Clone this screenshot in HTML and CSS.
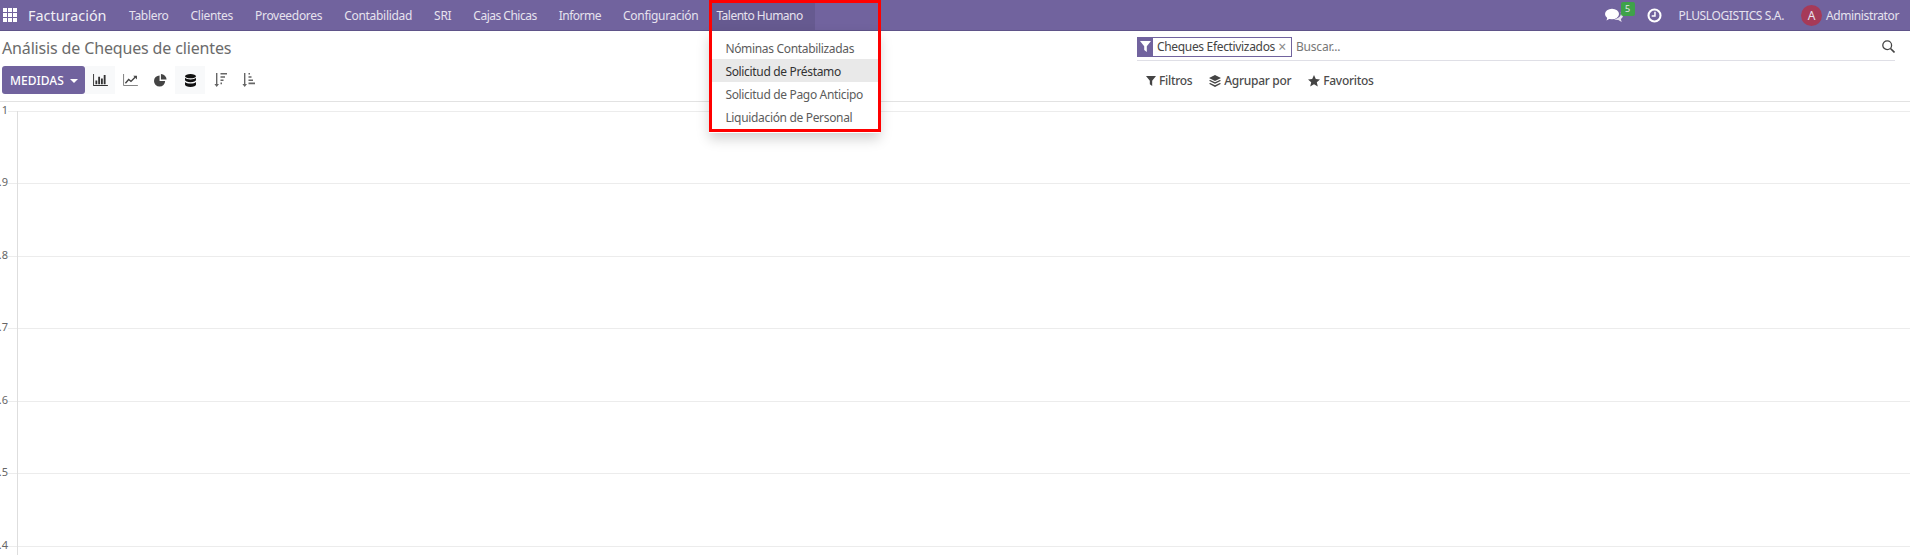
FILE: index.html
```html
<!DOCTYPE html>
<html lang="es">
<head>
    <meta charset="UTF-8">
    <title>Análisis de Cheques de clientes</title>
    <link rel="stylesheet" href="styles.css">
</head>
<body>
    <header class="navbar">
        <a class="apps-toggle">
            <svg width="14" height="14" viewBox="0 0 14 14" fill="#fff"><path d="M0 0h4v4H0zM5 0h4v4H5zM10 0h4v4h-4zM0 5h4v4H0zM5 5h4v4H5zM10 5h4v4h-4zM0 10h4v4H0zM5 10h4v4H5zM10 10h4v4h-4z"/></svg>
        </a>
        <a class="brand">Facturación</a>
        <nav class="menu">
            <a>Tablero</a>
            <a>Clientes</a>
            <a>Proveedores</a>
            <a>Contabilidad</a>
            <a>SRI</a>
            <a class="tight">Cajas Chicas</a>
            <a class="tight">Informe</a>
            <a>Configuración</a>
            <div class="menu-open">
                <a class="active tight">Talento Humano</a>
                <ul class="dropdown">
                    <li>Nóminas Contabilizadas</li>
                    <li class="hover">Solicitud de Préstamo</li>
                    <li>Solicitud de Pago Anticipo</li>
                    <li>Liquidación de Personal</li>
                </ul>
                <div class="highlight"></div>
            </div>
        </nav>
        <div class="systray">
            <span class="chat">
                <svg width="18" height="15" viewBox="0 0 18 15" fill="#fff"><ellipse cx="7" cy="6" rx="7" ry="5.2"/><path d="M2.5 9 1.5 12.5 6 10z"/><path d="M15.4 3.8C17 4.800 18 6.100 18 7.600c0 1.500-.9 2.700-2.200 3.500l.9 3-3.400-2.200c-1.500.2-3.100-.1-4.300-.8 3.900-.1 7-2.500 7-5.800 0-.5-.2-1-.6-1.500z" fill="#e8e4f0"/></svg>
                <b class="badge">5</b>
            </span>
            <svg class="clock" width="15" height="15" viewBox="0 0 16 16" fill="none" stroke="#fff"><circle cx="8" cy="8" r="6.400" stroke-width="2.200"/><path d="M8.500 4v4.600H5" stroke-width="1.600"/></svg>
            <span class="company">PLUSLOGISTICS S.A.</span>
            <span class="avatar">A</span>
            <span class="user">Administrator</span>
        </div>
    </header>

    <section class="control-panel">
        <div class="cp-left">
            <h1 class="title">Análisis de Cheques de clientes</h1>
            <div class="cp-buttons">
                <button class="btn-measures">MEDIDAS <i class="caret"></i></button>
                <button class="btn-icon tinted">
                    <svg width="15" height="12" viewBox="0 0 16 13" fill="#333"><path d="M0 0h1v12h15v1H0z"/><path d="M2.500 7h2v4h-2zM5.500 3h2v8h-2zM8.500 5h2v6h-2zM11.500 1h2v10h-2z"/></svg>
                </button>
                <button class="btn-icon">
                    <svg width="15" height="12" viewBox="0 0 16 13"><path d="M.5 0v12.500H16" fill="none" stroke="#777"/><path d="M2.500 10 6 6l2.500 2L13 3.500" fill="none" stroke="#444" stroke-width="1.500"/><path d="M11 2h4v4z" fill="#444"/></svg>
                </button>
                <button class="btn-icon">
                    <svg width="13" height="13" viewBox="0 0 14 14" fill="#444"><path d="M6 1.500a6 6 0 1 0 6 6H6z"/><path d="M7.500 0v6h6a6 6 0 0 0-6-6z"/></svg>
                </button>
                <button class="btn-icon tinted">
                    <svg width="11" height="13" viewBox="0 0 12 14" fill="#111"><ellipse cx="6" cy="2.300" rx="6" ry="2.300"/><path d="M0 4c1 1.300 3.500 1.800 6 1.800S11 5.300 12 4v2.500C12 7.800 9.300 8.800 6 8.800S0 7.800 0 6.500zM0 8.500c1 1.300 3.500 1.800 6 1.800s5-.5 6-1.800v3.200C12 13 9.300 14 6 14s-6-1-6-2.300z"/></svg>
                </button>
                <button class="btn-icon">
                    <svg width="13" height="14" viewBox="0 0 13 14" fill="#666"><path d="M2 0h1.400v11H5l-2.300 3L.4 11H2zM6.500 0H13v1.600H6.500zM6.500 3.200H11v1.600H6.500zM6.500 6.400H9.500V8H6.500zM6.500 9.600H8v1.600H6.500z"/></svg>
                </button>
                <button class="btn-icon">
                    <svg width="13" height="14" viewBox="0 0 13 14" fill="#666"><path d="M2 0h1.400v11H5l-2.300 3L.4 11H2zM6.500 0H8v1.600H6.500zM6.500 3.200H9.500v1.600H6.500zM6.500 6.400H11V8H6.500zM6.500 9.600H13v1.600H6.500z"/></svg>
                </button>
            </div>
        </div>
        <div class="cp-right">
            <div class="searchbar">
                <span class="facet-icon">
                    <svg width="11" height="11" viewBox="0 0 11 11" fill="#fff"><path d="M0 0h11L6.800 5.200V11L4.200 9V5.200z"/></svg>
                </span>
                <span class="facet">Cheques Efectivizados <i class="facet-x">×</i></span>
                <span class="search-input">Buscar...</span>
                <svg class="search-icon" width="13" height="13" viewBox="0 0 13 13" fill="none" stroke="#444" stroke-width="1.300"><circle cx="5.200" cy="5.200" r="4.400"/><path d="M8.500 8.500 12.500 12.500" stroke-width="1.600"/></svg>
            </div>
            <div class="search-options">
                <a>
                    <svg width="10" height="10" viewBox="0 0 11 11" fill="#444"><path d="M0 0h11L6.800 5.200V11L4.200 9V5.200z"/></svg>
                    Filtros
                </a>
                <a>
                    <svg width="12" height="12" viewBox="0 0 12 12" fill="#444"><path d="M6 0l6 3-6 3-6-3zM1.200 5 6 7.300 10.800 5 12 5.800 6 8.800 0 5.800zM1.200 8 6 10.200 10.800 8 12 8.800 6 12 0 8.800z"/></svg>
                    Agrupar por
                </a>
                <a>
                    <svg width="12" height="12" viewBox="0 0 12 12" fill="#444"><path d="M6 0l1.800 4 4.200.4-3.200 2.800 1 4.400L6 9.300 2.200 11.600l1-4.400L0 4.400 4.200 4z"/></svg>
                    Favoritos
                </a>
            </div>
        </div>
    </section>

    <main class="chart">
        <svg width="1910" height="453" viewBox="0 0 1910 453">
            <g stroke="#ececec" stroke-width="1">
                <path d="M8 9.500H1910"/>
                <path d="M8 81.500H1910"/>
                <path d="M8 154.500H1910"/>
                <path d="M8 226.500H1910"/>
                <path d="M8 299.500H1910"/>
                <path d="M8 371.500H1910"/>
                <path d="M8 444.500H1910"/>
            </g>
            <path d="M17.500 9V453" stroke="#dedede"/>
            <g class="tick">
                <text x="8" y="12">1</text>
                <text x="8" y="84">.9</text>
                <text x="8" y="157">.8</text>
                <text x="8" y="229">.7</text>
                <text x="8" y="302">.6</text>
                <text x="8" y="374">.5</text>
                <text x="8" y="447">.4</text>
            </g>
        </svg>
    </main>
</body>
</html>
```

FILE: styles.css
```css
* {
    box-sizing: border-box;
}

body {
    font-family: "Noto Sans", sans-serif;
    font-size: 12px;
    margin: 0;
    background-color: #fff;
    color: #4c4c4c;
    height: 555px;
    overflow: hidden;
}

/* barra superior */
.navbar {
    display: flex;
    align-items: center;
    height: 31px;
    background-color: #71639e;
    border-bottom: 1px solid #5f5389;
    color: #fff;
}

.apps-toggle {
    display: flex;
    padding: 0 0 0 3px;
}

.brand {
    font-size: 14.4px;
    margin-left: 11px;
    width: 90px;
    opacity: 0.9;
}

.menu {
    display: flex;
    height: 30px;
}

.menu a {
    display: flex;
    align-items: center;
    padding: 0 11px;
    letter-spacing: -0.3px;
    color: #e6e2ee;
}

.menu a.tight {
    letter-spacing: -0.5px;
}

.menu-open {
    position: relative;
    display: flex;
}

.menu .active {
    background-color: #665a90;
    padding-left: 7px;
    padding-right: 12px;
}

.dropdown {
    position: absolute;
    top: 31px;
    left: 0;
    z-index: 5;
    width: 171px;
    margin: 0;
    padding: 5px 0;
    list-style: none;
    background-color: #fff;
    box-shadow: 0 6px 12px rgba(0, 0, 0, 0.18);
}

.dropdown li {
    height: 23px;
    line-height: 25px;
    padding-left: 16px;
    letter-spacing: -0.33px;
    color: #5c5c5c;
    white-space: nowrap;
}

.dropdown .hover {
    background-color: #e9e9e9;
    color: #333;
}

.highlight {
    position: absolute;
    top: 0;
    left: 0;
    z-index: 6;
    width: 172px;
    height: 132px;
    border: 3px solid #f00;
    pointer-events: none;
}

.systray {
    display: flex;
    align-items: center;
    margin-left: auto;
    padding-right: 11px;
    color: #e6e2ee;
    letter-spacing: -0.38px;
}

.chat {
    position: relative;
    display: flex;
    margin-right: 24px;
}

.badge {
    position: absolute;
    top: -6px;
    left: 16px;
    width: 14px;
    height: 14px;
    line-height: 14px;
    border-radius: 2px;
    background-color: #3fa24a;
    font-size: 9px;
    font-weight: 400;
    text-align: center;
}

.clock {
    margin-right: 17px;
}

.company {
    margin-right: 17px;
}

.avatar {
    width: 21px;
    height: 21px;
    line-height: 21px;
    margin-right: 4px;
    border-radius: 50%;
    background-color: #a63a58;
    text-align: center;
}

/* panel de control */
.control-panel {
    display: grid;
    grid-template-columns: 1137px 1fr;
    height: 71px;
    border-bottom: 1px solid #e2e2e2;
}

.title {
    margin: 0;
    padding: 6px 0 0 2px;
    height: 35px;
    font-size: 16px;
    letter-spacing: -0.15px;
    line-height: 23px;
    font-weight: 400;
    color: #6b6b6b;
}

.cp-buttons {
    display: flex;
    padding-left: 2px;
}

.cp-buttons button {
    border: none;
    height: 28px;
    font-family: inherit;
}

.btn-measures {
    width: 83px;
    padding: 0 0 0 1px;
    border-radius: 3px;
    background-color: #71639e;
    color: #fff;
    font-size: 12px;
    font-weight: 500;
}

.caret {
    display: inline-block;
    margin-left: 3px;
    vertical-align: 2px;
    border-top: 4px solid #fff;
    border-left: 4px solid transparent;
    border-right: 4px solid transparent;
}

.btn-icon {
    display: flex;
    align-items: center;
    justify-content: center;
    width: 30px;
    padding: 0;
    background-color: transparent;
}

.btn-icon.tinted {
    background-color: #f8f9fa;
}

.btn-icon:last-child {
    width: 27px;
}

.cp-right {
    padding-top: 6px;
}

.searchbar {
    display: flex;
    align-items: center;
    height: 24px;
    margin-right: 15px;
    border-bottom: 1px solid #dfdfe6;
    padding-bottom: 4px;
}

.facet-icon {
    display: flex;
    align-items: center;
    justify-content: center;
    width: 16px;
    height: 20px;
    background-color: #71639e;
}

.facet {
    display: flex;
    align-items: center;
    justify-content: space-between;
    height: 20px;
    width: 139px;
    padding: 0 5px 0 4px;
    border: 1px solid #71639e;
    border-left: none;
    white-space: nowrap;
    letter-spacing: -0.33px;
    color: #444;
}

.facet-x {
    font-style: normal;
    font-size: 14px;
    color: #888;
}

.search-input {
    margin-left: 4px;
    letter-spacing: -0.2px;
    color: #777;
}

.search-icon {
    margin-left: auto;
}

.search-options {
    display: flex;
    gap: 17px;
    padding: 11px 0 0 9px;
    font-weight: 500;
    letter-spacing: -0.3px;
    color: #4c4c4c;
}

.search-options a {
    display: flex;
    align-items: center;
    gap: 3px;
}

/* grafico */
.chart svg {
    display: block;
}

.tick text {
    font-family: "Noto Sans", sans-serif;
    font-size: 11px;
    fill: #666;
    text-anchor: end;
}
```
